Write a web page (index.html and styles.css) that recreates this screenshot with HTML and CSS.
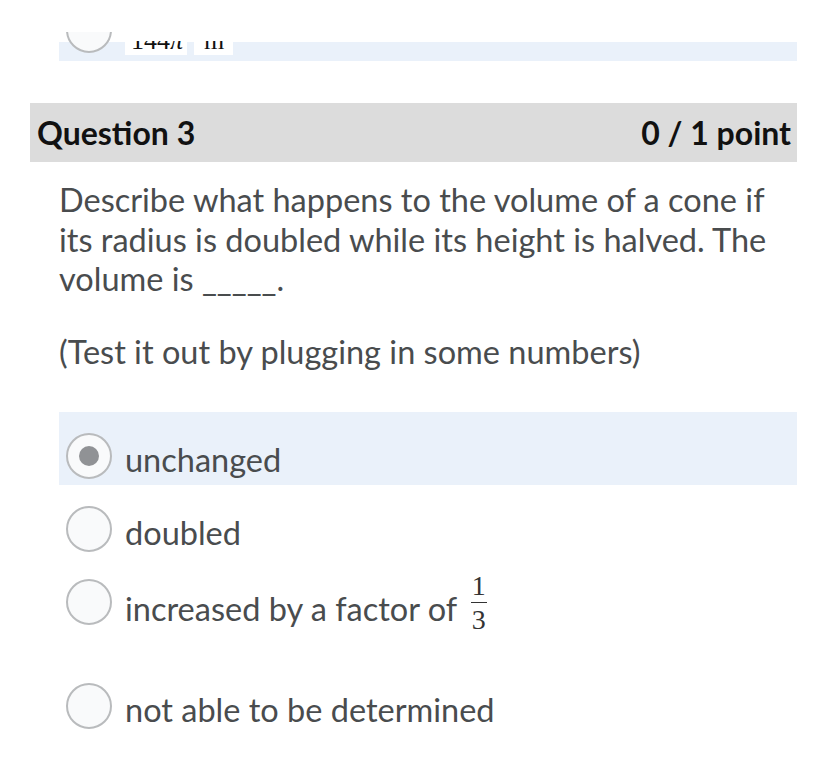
FILE: index.html
```html
<!DOCTYPE html>
<html>
<head>
<meta charset="utf-8">
<link rel="stylesheet" href="styles.css">
</head>
<body>
<div class="page">
  <div class="prev">
    <span class="prev-rclip"><span class="prev-radio"></span></span>
    <div class="prev-clip">
      <span class="prev-box prev-box1"><span class="prev-txt">144<i>π</i></span></span><span class="prev-box prev-box2"><span class="prev-txt">m</span></span>
    </div>
  </div>

  <div class="qhead">
    <span class="qtitle">Question 3</span>
    <span class="qscore">0 / 1 point</span>
  </div>

  <div class="qbody">
    <p class="qtext">Describe what happens to the volume of a cone if its radius is doubled while its height is halved. The volume is _____.</p>
    <p class="qtext qhint">(Test it out by plugging in some numbers)</p>
  </div>

  <div class="opts">
    <div class="opt opt-sel">
      <span class="radio radio-on"><span class="dot"></span></span>
      <span class="label">unchanged</span>
    </div>
    <div class="opt">
      <span class="radio"></span>
      <span class="label">doubled</span>
    </div>
    <div class="opt opt-tall">
      <span class="radio"></span>
      <span class="label">increased by a factor of <span class="frac"><span class="num">1</span><span class="den">3</span></span></span>
    </div>
    <div class="opt">
      <span class="radio"></span>
      <span class="label">not able to be determined</span>
    </div>
  </div>
</div>
</body>
</html>
```

FILE: styles.css
```css
html, body {
  margin: 0;
  padding: 0;
  background: #ffffff;
}

.page {
  width: 828px;
  height: 766px;
  overflow: hidden;
  font-family: Lato, "Open Sans", "Liberation Sans", sans-serif;
  color: #494c4e;
}

.prev {
  position: relative;
  margin: 42px 0 0 59px;
  width: 738px;
  height: 19px;
  background: #eaf1fa;
}

.prev-rclip {
  position: absolute;
  left: 6px;
  top: -10px;
  width: 48px;
  height: 24px;
  overflow: hidden;
}

.prev-radio {
  position: absolute;
  left: 1px;
  top: -25px;
  width: 42px;
  height: 42px;
  border: 2px solid #b9bbbd;
  border-radius: 50%;
  background: #f9fafb;
}

.prev-clip {
  position: absolute;
  left: 66px;
  top: -9px;
  height: 22px;
  display: flex;
  gap: 7px;
}

.prev-box {
  display: block;
  height: 22px;
  background: #ffffff;
  overflow: hidden;
}

.prev-box1 {
  width: 62px;
}

.prev-box2 {
  width: 39px;
}

.prev-txt {
  display: block;
  font-family: "Liberation Serif", "DejaVu Serif", serif;
  font-size: 26px;
  line-height: 26px;
  color: #111;
  margin: -5px 0 0 6px;
  clip-path: inset(13px 0 0 0);
}

.prev-box2 .prev-txt {
  margin-left: 10px;
}

.qhead {
  margin: 42px 0 0 30px;
  width: 767px;
  height: 59px;
  box-sizing: border-box;
  padding: 0 6px 0 7px;
  background: #dcdcdc;
  display: flex;
  align-items: center;
  justify-content: space-between;
  font-weight: 700;
  font-size: 32px;
  color: #111111;
}

.qbody {
  margin: 18px 0 0 59px;
  width: 740px;
}

.qtext {
  margin: 0;
  font-size: 32.5px;
  line-height: 39.5px;
}

.qhint {
  margin-top: 33px;
}

.opts {
  margin: 41px 0 0 59px;
  width: 738px;
}

.opt {
  display: flex;
  align-items: flex-start;
  gap: 13px;
  padding: 21px 0 2px 7px;
}

.opt-sel {
  background: #eaf1fa;
}

.opt-tall {
  padding-bottom: 33px;
}

.radio {
  flex: none;
  width: 42px;
  height: 42px;
  border: 2px solid #b9bbbd;
  border-radius: 50%;
  background: #f9fafb;
  display: flex;
  align-items: center;
  justify-content: center;
}

.dot {
  width: 20px;
  height: 20px;
  border-radius: 50%;
  background: #909295;
}

.label {
  display: block;
  height: 46px;
  font-size: 32.5px;
  line-height: 46px;
  margin-top: 4px;
  white-space: nowrap;
}

.frac {
  display: inline-flex;
  flex-direction: column;
  align-items: center;
  vertical-align: middle;
  font-family: "Liberation Serif", "DejaVu Serif", serif;
  font-size: 28px;
  line-height: 26px;
  color: #333;
  margin-left: 6px;
  position: relative;
  top: -10px;
}

.num {
  display: block;
  padding: 0 1px 3px;
  border-bottom: 1.5px solid #333;
}

.den {
  display: block;
  padding: 4px 1px 0;
}
```
